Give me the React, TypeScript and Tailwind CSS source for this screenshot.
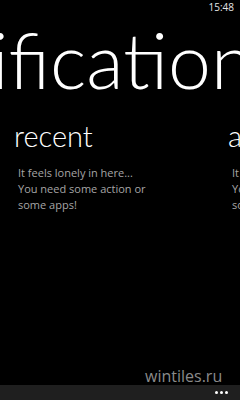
import React from "react";

export default function App() {
  const body = { fontFamily: '"Open Sans", "Noto Sans", sans-serif' };
  const head = { fontFamily: 'Lato, "Open Sans", sans-serif' };
  const Col = ({ title }: { title: string }) => (
    <div className="w-[214px] shrink-0">
      <div className="mt-[20px] text-[29px] leading-[36px] font-light" style={head}>
        {title}
      </div>
      <div
        className="mt-[11px] pl-[4px] text-[11px] leading-[16px] text-[#a6a6a6]"
        style={body}
      >
        It feels lonely in here...
        <br />
        You need some action or
        <br />
        some apps!
      </div>
    </div>
  );
  return (
    <div
      className="relative w-[240px] h-[400px] bg-black overflow-hidden flex flex-col text-white"
      style={body}
    >
      <div className="h-[14px] flex justify-end items-start pr-[6px] pt-[1px] text-[10px] leading-[12px] text-[#e6e6e6]">
        15:48
      </div>
      <div
        className="mt-[7px] h-[77px] whitespace-nowrap font-light text-[77px] leading-none ml-[-121px]"
        style={head}
      >
        notifications
      </div>
      <div className="flex pl-[14px]">
        <Col title="recent" />
        <Col title="all" />
      </div>
      <div className="flex-1" />
      <div className="h-[15px] bg-[#1f1f1f] flex justify-end items-center pr-[12px] gap-[2px]">
        <span className="w-[3px] h-[3px] rounded-full bg-white" />
        <span className="w-[3px] h-[3px] rounded-full bg-white" />
        <span className="w-[3px] h-[3px] rounded-full bg-white" />
      </div>
      <div className="absolute left-[145px] top-[366px] text-[16px] leading-[20px] text-[#8a8a8a]">
        wintiles.ru
      </div>
    </div>
  );
}
